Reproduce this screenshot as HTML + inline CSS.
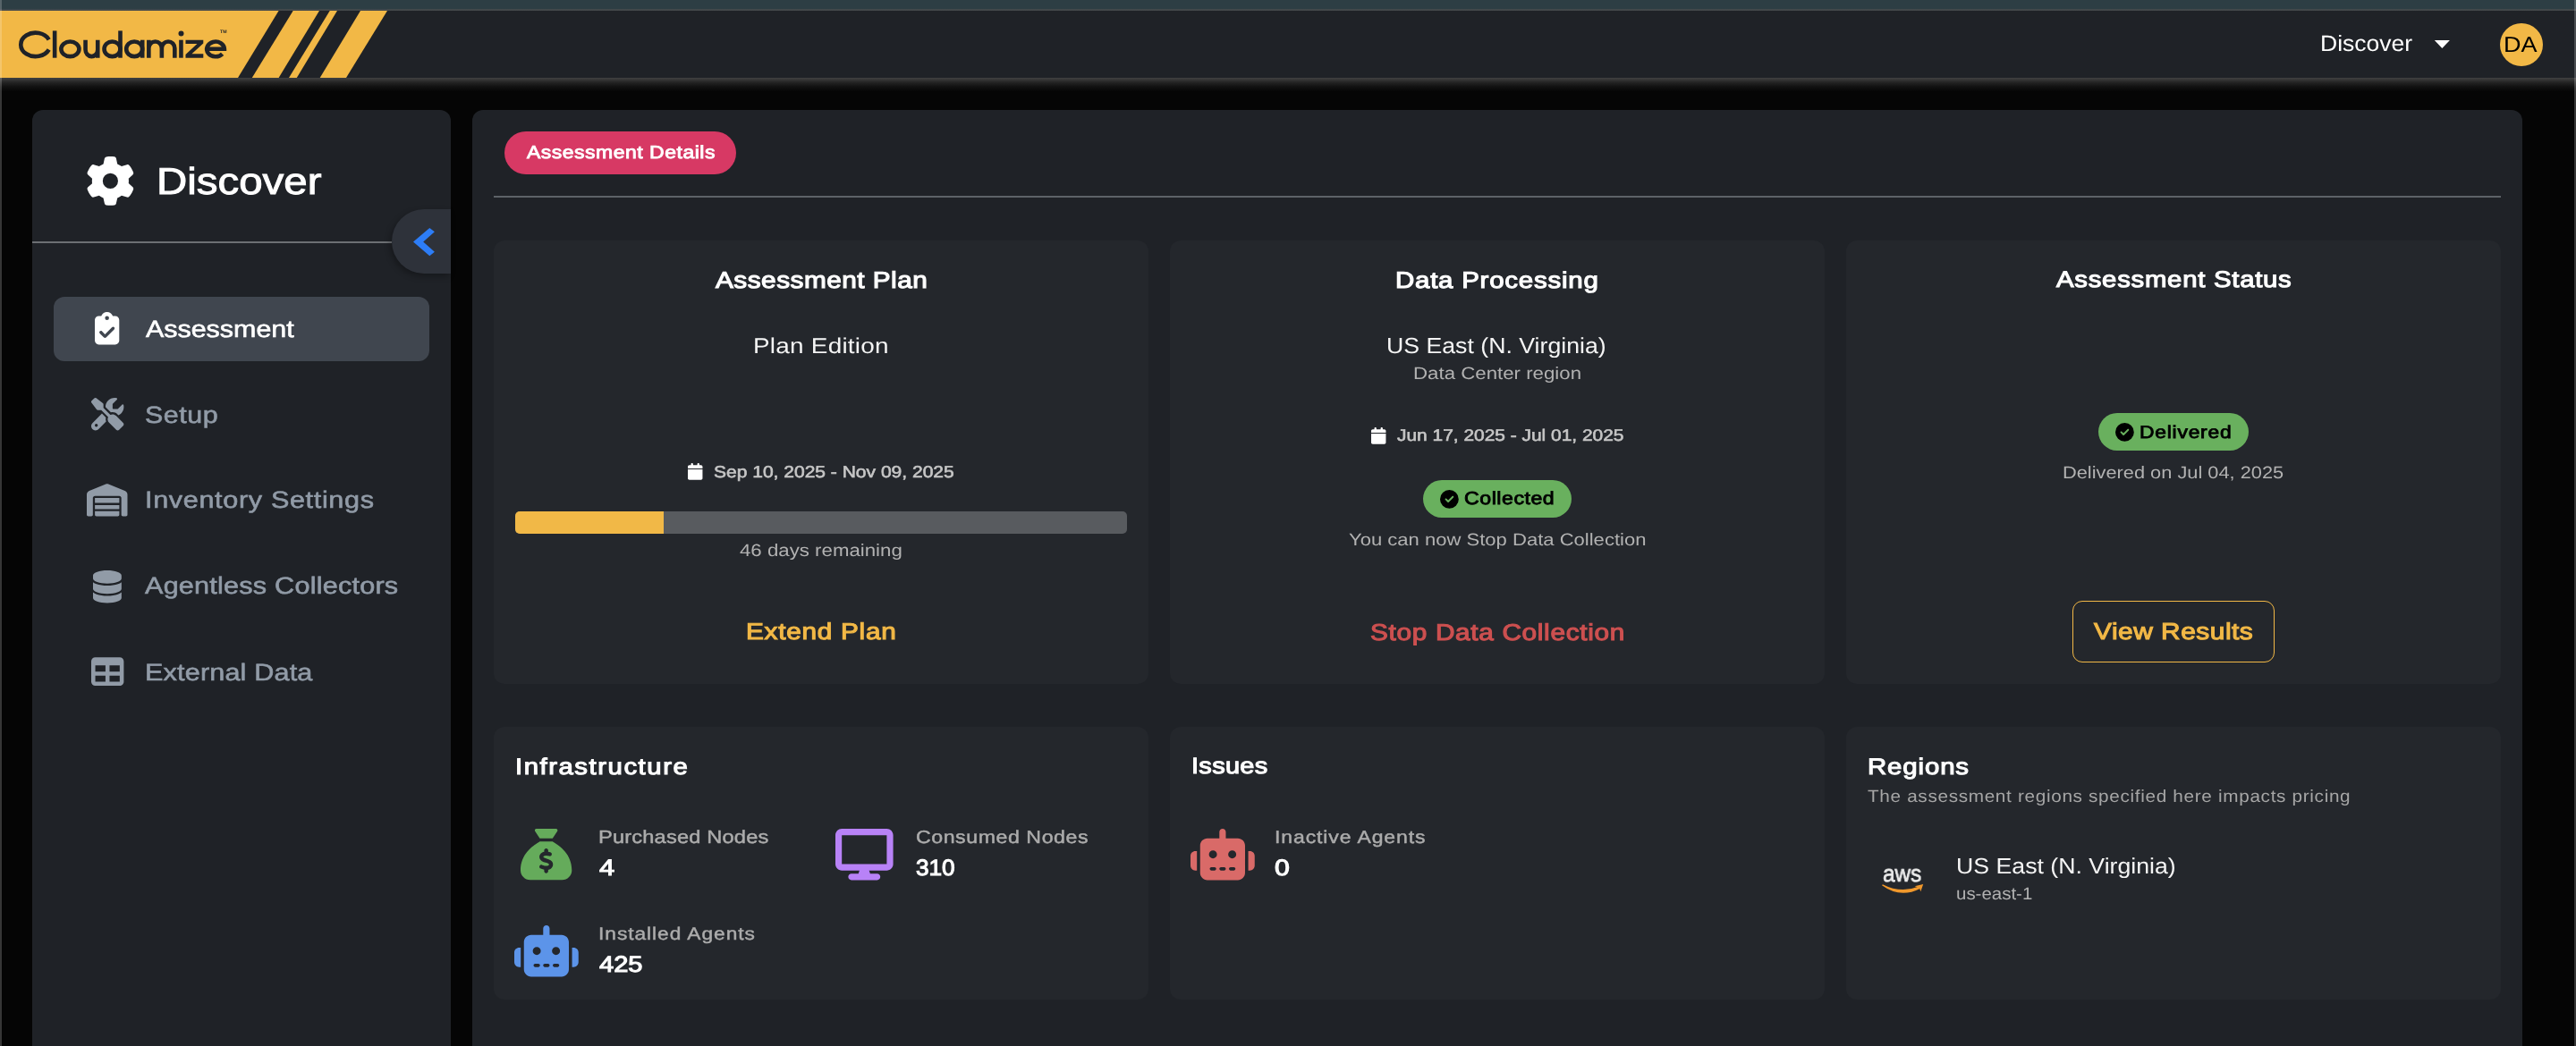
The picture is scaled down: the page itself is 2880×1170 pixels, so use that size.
<!DOCTYPE html>
<html><head><meta charset="utf-8"><title>Cloudamize - Assessment Details</title>
<style>
html,body{margin:0;padding:0}
html{width:2880px;height:1170px;overflow:hidden;background:#050505}
body{width:2880px;height:1170px;overflow:hidden;position:relative;background:#050505;font-family:"Liberation Sans",sans-serif}
.b{position:absolute;display:block}
svg.b{overflow:visible}
.t{position:absolute;display:block;white-space:nowrap;line-height:1;transform-origin:0 50%;will-change:transform;text-rendering:geometricPrecision;-webkit-font-smoothing:antialiased;font-family:"Liberation Sans",sans-serif}
</style></head><body>
<div class="b" style="left:0px;top:0px;width:2880px;height:10px;background:#2d3e44;border-radius:0px;"></div>
<div class="b" style="left:0px;top:10px;width:2880px;height:2px;background:linear-gradient(#3a4548 0,#464a4d 50%,#43474a 100%);border-radius:0px;"></div>
<div class="b" style="left:0px;top:12px;width:2880px;height:75px;background:#1f2227;border-radius:0px;"></div>
<div class="b" style="left:0px;top:87px;width:2880px;height:16px;background:linear-gradient(#414141 0,#363636 2px,#242424 5px,#111 10px,#050505 15.5px);border-radius:0px;"></div>
<svg class="b" style="left:0;top:12px" width="460" height="75" viewBox="0 12 460 75"><polygon points="0,12 311.6,12 266,87 0,87" fill="#f2b846"/><polygon points="327.7,12 357,12 311.6,87 281.8,87" fill="#f2b846"/><polygon points="368.75,12 377,12 331.8,87 323,87" fill="#f2b846"/><polygon points="403,12 433,12 387,87 357.7,87" fill="#f2b846"/></svg>
<svg class="b" style="left:0;top:12px" width="300" height="75" viewBox="0 12 300 75" fill="none" stroke="#1f2228" stroke-width="4.6"><path d="M54.7 44.3 A16.5 13.2 0 1 0 54.7 55.5"/><path d="M61.15 34.4 V64.7"/><ellipse cx="78.4" cy="54.8" rx="10.05" ry="8.35"/><path d="M95.55 44.7 V55.5 A6.85 7.6 0 0 0 109.25 55.5 M109.25 44.7 V64.7"/><ellipse cx="125.5" cy="54.8" rx="9" ry="8.35"/><path d="M134.5 34.4 V64.7"/><ellipse cx="150.2" cy="54.8" rx="9" ry="8.35"/><path d="M159.2 44.7 V64.7"/><path d="M166.35 44.7 V64.7 M166.35 54 A7.25 7.5 0 0 1 180.85 54 V64.7 M180.85 54 A7.25 7.5 0 0 1 195.35 54 V64.7"/><path d="M202.45 44.7 V64.7"/><path d="M231.2 54.8 H250.9 A9.85 8.35 0 1 0 248.6 60.3"/><polygon points="207.5,44.7 227.3,44.7 227.3,48.6 214.4,60.3 227.3,60.3 227.3,64.7 207.5,64.7 207.5,60.9 220.4,49.1 207.5,49.1" fill="#1f2228" stroke="none"/><circle cx="202.5" cy="37.4" r="3" fill="#1f2228" stroke="none"/></svg>
<span class="t" style="left:246.2px;top:33.6px;font-size:5.2px;font-weight:700;color:#1f2228">TM</span>
<span class="t" style="left:2593.73px;top:37px;font-size:25.00px;font-weight:400;color:#fff;letter-spacing:0.000px;transform:scaleX(1.0613);">Discover</span>
<svg class="b" style="left:2721px;top:44px" width="19" height="11" viewBox="2721 44 19 11"><polygon points="2721.8,44.9 2738.9,44.9 2730.35,53.9" fill="#fff"/></svg>
<div class="b" style="left:2795px;top:25.95px;width:48.2px;height:48.2px;background:#f2b846;border-radius:25px;"></div>
<span class="t" style="left:2799.39px;top:39px;font-size:24.42px;font-weight:400;color:#000;letter-spacing:0.000px;transform:scaleX(1.1078);">DA</span>
<div class="b" style="left:36px;top:122.8px;width:468px;height:1047.2px;background:#1f2227;border-radius:0px;border-radius:12px 12px 0 0"></div>
<div class="b" style="left:527.8px;top:122.8px;width:2292.2px;height:1047.2px;background:#1f2227;border-radius:0px;border-radius:12px 12px 0 0"></div>
<svg class="b" style="left:95.95px;top:175.10px;" width="54.80" height="54.80" viewBox="0 0 512 512" fill="#fff"><path d="M495.9 166.6c3.2 8.7 .5 18.4-6.4 24.6l-43.3 39.4c1.1 8.3 1.7 16.800 1.7 25.400s-.6 17.100-1.700 25.400l43.300 39.400c6.900 6.200 9.600 15.900 6.400 24.600c-4.400 11.900-9.700 23.300-15.800 34.300l-4.700 8.100c-6.600 11-14 21.400-22.100 31.200c-5.900 7.200-15.700 9.600-24.500 6.800l-55.700-17.700c-13.400 10.300-28.200 18.900-44 25.400l-12.500 57.100c-2 9.100-9 16.300-18.200 17.800c-13.800 2.300-28 3.500-42.500 3.500s-28.700-1.200-42.500-3.500c-9.200-1.500-16.200-8.700-18.200-17.800l-12.500-57.100c-15.800-6.500-30.600-15.100-44-25.400L83.100 425.900c-8.800 2.800-18.600 .3-24.500-6.800c-8.100-9.800-15.500-20.200-22.100-31.200l-4.700-8.100c-6.100-11-11.400-22.400-15.800-34.300c-3.200-8.700-.5-18.400 6.400-24.600l43.300-39.400C64.600 273.100 64 264.600 64 256s.6-17.100 1.700-25.400L22.400 191.200c-6.900-6.200-9.600-15.900-6.400-24.600c4.400-11.900 9.700-23.300 15.800-34.300l4.700-8.100c6.600-11 14-21.400 22.100-31.200c5.900-7.200 15.700-9.600 24.500-6.800l55.700 17.700c13.400-10.300 28.200-18.900 44-25.400l12.500-57.100c2-9.100 9-16.300 18.200-17.800C227.300 1.200 241.500 0 256 0s28.700 1.200 42.500 3.500c9.200 1.500 16.200 8.700 18.200 17.800l12.500 57.100c15.800 6.500 30.600 15.100 44 25.400l55.700-17.700c8.800-2.800 18.600-.3 24.500 6.800c8.100 9.800 15.500 20.200 22.100 31.200l4.700 8.100c6.100 11 11.400 22.400 15.800 34.300zM256 336a80 80 0 1 0 0-160 80 80 0 1 0 0 160z"/></svg>
<span class="t" style="left:174.63px;top:182px;font-size:41.79px;font-weight:400;color:#fff;letter-spacing:0.000px;transform:scaleX(1.1354);-webkit-text-stroke:0.95px #fff;">Discover</span>
<div class="b" style="left:36px;top:269.8px;width:402px;height:2.2px;background:#6c6f73;border-radius:0px;"></div>
<div class="b" style="left:437.8px;top:234.1px;width:66.2px;height:71.8px;background:#2e323a;border-radius:0px;border-radius:36px 0 0 36px;box-shadow:-2px 3px 7px rgba(0,0,0,.3)"></div>
<svg class="b" style="left:458px;top:252px" width="32" height="38" viewBox="458 252 32 38"><polygon points="480.3,254.9 485.9,259.3 473.2,270.55 485.9,281.8 480.3,286.2 462,270.55" fill="#2d7df6"/></svg>
<div class="b" style="left:60px;top:332px;width:420px;height:72px;background:#40464f;border-radius:12px;"></div>
<svg class="b" style="left:106.35px;top:349.30px;" width="27.30" height="36.40" viewBox="0 0 384 512" fill="#fff"><path d="M192 0c-41.800 0-77.400 26.700-90.500 64H64C28.700 64 0 92.700 0 128V448c0 35.300 28.700 64 64 64H320c35.300 0 64-28.700 64-64V128c0-35.300-28.700-64-64-64H282.500C269.400 26.700 233.800 0 192 0zm0 64a32 32 0 1 1 0 64 32 32 0 1 1 0-64zM305 273L177 401c-9.400 9.400-24.600 9.400-33.900 0L79 337c-9.400-9.400-9.400-24.600 0-33.900s24.600-9.400 33.900 0l47 47L271 239c9.400-9.400 24.600-9.400 33.900 0s9.400 24.600 0 33.900z"/></svg>
<span class="t" style="left:162.64px;top:355px;font-size:26.60px;font-weight:400;color:#fff;letter-spacing:0.000px;transform:scaleX(1.1438);-webkit-text-stroke:0.60px #fff;">Assessment</span>
<svg class="b" style="left:101.80px;top:445.35px;" width="36.40" height="36.40" viewBox="0 0 512 512" fill="#919ba7"><path d="M78.600 5C69.100-2.400 55.600-1.500 47 7L7 47c-8.500 8.500-9.400 22-2.100 31.600l80 104c4.500 5.900 11.600 9.400 19 9.400h54.100l109 109c-14.700 29-10 65.400 14.300 89.600l112 112c12.500 12.500 32.800 12.500 45.300 0l64-64c12.500-12.500 12.500-32.800 0-45.300l-112-112c-24.200-24.200-60.600-29-89.600-14.300l-109-109V104c0-7.500-3.500-14.500-9.400-19L78.600 5zM19.900 396.100C7.200 408.800 0 426.100 0 444.100C0 481.600 30.400 512 67.900 512c18 0 35.300-7.200 48-19.900L233.700 374.300c-7.800-20.900-9-43.600-3.600-65.100l-61.700-61.700L19.900 396.100zM512 144c0-10.500-1.100-20.700-3.200-30.500c-2.400-11.200-16.100-14.100-24.200-6l-63.900 63.900c-3 3-7.100 4.700-11.300 4.700H352c-8.800 0-16-7.200-16-16V102.600c0-4.200 1.700-8.300 4.700-11.300l63.900-63.900c8.100-8.100 5.200-21.800-6-24.200C388.700 1.100 378.500 0 368 0C288.500 0 224 64.500 224 144l0 .8 85.300 85.300c36-9.100 75.800 .5 104 28.700L429 274.500c49-23 83-72.800 83-130.500zM56 432a24 24 0 1 1 48 0 24 24 0 1 1 -48 0z"/></svg>
<span class="t" style="left:162.29px;top:451px;font-size:26.45px;font-weight:400;color:#919ba7;letter-spacing:0.501px;transform:scaleX(1.1500);-webkit-text-stroke:0.60px #919ba7;">Setup</span>
<svg class="b" style="left:97.25px;top:541.40px;" width="45.50" height="36.40" viewBox="0 0 640 512" fill="#919ba7"><path d="M0 488V171.3c0-26.200 15.900-49.700 40.200-59.400L308.100 4.800c7.600-3.100 16.100-3.100 23.800 0L599.800 111.900c24.300 9.700 40.200 33.300 40.200 59.400V488c0 13.300-10.700 24-24 24H568c-13.300 0-24-10.700-24-24V224c0-17.700-14.300-32-32-32H128c-17.700 0-32 14.300-32 32V488c0 13.300-10.700 24-24 24H24c-13.300 0-24-10.700-24-24zm488 24l-336 0c-13.300 0-24-10.700-24-24V432H512l0 56c0 13.300-10.700 24-24 24zM128 400V336H512v64H128zm0-96V224H512l0 80H128z"/></svg>
<span class="t" style="left:161.66px;top:546px;font-size:26.60px;font-weight:400;color:#919ba7;letter-spacing:0.573px;transform:scaleX(1.1500);-webkit-text-stroke:0.60px #919ba7;">Inventory Settings</span>
<svg class="b" style="left:104.08px;top:637.50px;" width="31.85" height="36.40" viewBox="0 0 448 512" fill="#919ba7"><path d="M448 80v48c0 44.200-100.300 80-224 80S0 172.200 0 128V80C0 35.800 100.300 0 224 0S448 35.800 448 80zM393.200 214.700c20.800-7.400 39.900-16.900 54.800-28.600V288c0 44.200-100.300 80-224 80S0 332.200 0 288V186.100c14.900 11.800 34 21.200 54.800 28.600C99.700 230.700 159.500 240 224 240s124.300-9.300 169.200-25.300zM0 346.100c14.900 11.800 34 21.200 54.800 28.600C99.700 390.700 159.500 400 224 400s124.300-9.300 169.200-25.300c20.800-7.400 39.900-16.900 54.800-28.600V432c0 44.200-100.300 80-224 80S0 476.200 0 432V346.100z"/></svg>
<span class="t" style="left:162.44px;top:642px;font-size:26.60px;font-weight:400;color:#919ba7;letter-spacing:0.198px;transform:scaleX(1.1500);-webkit-text-stroke:0.60px #919ba7;">Agentless Collectors</span>
<svg class="b" style="left:101.80px;top:733.40px;" width="36.40" height="36.40" viewBox="0 0 512 512" fill="#919ba7"><path d="M64 256V160H224v96H64zm0 64H224v96H64V320zm224 96V320H448v96H288zM448 256H288V160H448v96zM64 32C28.700 32 0 60.700 0 96V416c0 35.300 28.700 64 64 64H448c35.300 0 64-28.700 64-64V96c0-35.300-28.700-64-64-64H64z"/></svg>
<span class="t" style="left:161.66px;top:739px;font-size:26.60px;font-weight:400;color:#919ba7;letter-spacing:0.150px;transform:scaleX(1.1500);-webkit-text-stroke:0.60px #919ba7;">External Data</span>
<div class="b" style="left:564px;top:146.9px;width:259px;height:48.1px;background:#d73964;border-radius:24.05px;"></div>
<span class="t" style="left:588.69px;top:161px;font-size:19.99px;font-weight:400;color:#fff;letter-spacing:0.439px;transform:scaleX(1.1500);-webkit-text-stroke:0.85px #fff;">Assessment Details</span>
<div class="b" style="left:552px;top:219.1px;width:2244px;height:2px;background:#5d6267;border-radius:0px;"></div>
<div class="b" style="left:552px;top:269px;width:732px;height:496px;background:#24272c;border-radius:12px;"></div>
<div class="b" style="left:552px;top:813px;width:732px;height:305px;background:#24272c;border-radius:12px;"></div>
<div class="b" style="left:1308px;top:269px;width:732px;height:496px;background:#24272c;border-radius:12px;"></div>
<div class="b" style="left:1308px;top:813px;width:732px;height:305px;background:#24272c;border-radius:12px;"></div>
<div class="b" style="left:2064px;top:269px;width:732px;height:496px;background:#24272c;border-radius:12px;"></div>
<div class="b" style="left:2064px;top:813px;width:732px;height:305px;background:#24272c;border-radius:12px;"></div>
<span class="t" style="left:799.73px;top:302px;font-size:25.87px;font-weight:400;color:#fff;letter-spacing:0.439px;transform:scaleX(1.1500);-webkit-text-stroke:1.10px #fff;">Assessment Plan</span>
<span class="t" style="left:842.12px;top:376px;font-size:24.27px;font-weight:400;color:#f4f4f4;letter-spacing:0.205px;transform:scaleX(1.1500);">Plan Edition</span>
<svg class="b" style="left:768.73px;top:518.15px;" width="16.45" height="18.80" viewBox="0 0 448 512" fill="#fff"><path d="M96 32V64H48C21.500 64 0 85.500 0 112v48H448V112c0-26.500-21.500-48-48-48H352V32c0-17.700-14.300-32-32-32s-32 14.300-32 32V64H160V32c0-17.700-14.300-32-32-32S96 14.300 96 32zM448 192H0V464c0 26.500 21.500 48 48 48H400c26.500 0 48-21.500 48-48V192z"/></svg>
<span class="t" style="left:798.18px;top:519px;font-size:18.46px;font-weight:400;color:#c6c6c6;letter-spacing:0.000px;transform:scaleX(1.1397);-webkit-text-stroke:0.60px #c6c6c6;">Sep 10, 2025 - Nov 09, 2025</span>
<div class="b" style="left:575.9px;top:571.8px;width:684.2px;height:25.3px;background:#585b5f;border-radius:5px;"></div>
<div class="b" style="left:575.9px;top:571.8px;width:166.3px;height:25.3px;background:#f1b847;border-radius:0px;border-radius:5px 0 0 5px"></div>
<span class="t" style="left:826.75px;top:607px;font-size:19.33px;font-weight:400;color:#b2b2b2;letter-spacing:0.008px;transform:scaleX(1.1500);">46 days remaining</span>
<span class="t" style="left:833.91px;top:695px;font-size:25.87px;font-weight:400;color:#f2b846;letter-spacing:0.643px;transform:scaleX(1.1500);-webkit-text-stroke:1.10px #f2b846;">Extend Plan</span>
<span class="t" style="left:1560.43px;top:302px;font-size:25.60px;font-weight:400;color:#fff;letter-spacing:0.671px;transform:scaleX(1.1500);-webkit-text-stroke:1.09px #fff;">Data Processing</span>
<span class="t" style="left:1550.38px;top:376px;font-size:24.56px;font-weight:400;color:#f4f4f4;letter-spacing:0.000px;transform:scaleX(1.0871);">US East (N. Virginia)</span>
<span class="t" style="left:1579.66px;top:409px;font-size:19.33px;font-weight:400;color:#b2b2b2;letter-spacing:0.013px;transform:scaleX(1.1500);">Data Center region</span>
<svg class="b" style="left:1532.98px;top:477.85px;" width="16.45" height="18.80" viewBox="0 0 448 512" fill="#fff"><path d="M96 32V64H48C21.500 64 0 85.500 0 112v48H448V112c0-26.500-21.500-48-48-48H352V32c0-17.700-14.300-32-32-32s-32 14.300-32 32V64H160V32c0-17.700-14.300-32-32-32S96 14.300 96 32zM448 192H0V464c0 26.500 21.500 48 48 48H400c26.500 0 48-21.500 48-48V192z"/></svg>
<span class="t" style="left:1562.12px;top:478px;font-size:18.31px;font-weight:400;color:#c6c6c6;letter-spacing:0.000px;transform:scaleX(1.1427);-webkit-text-stroke:0.60px #c6c6c6;">Jun 17, 2025 - Jul 01, 2025</span>
<div class="b" style="left:1591px;top:536.9px;width:166.2px;height:42.2px;background:#69b05e;border-radius:21.1px;"></div>
<svg class="b" style="left:1609.60px;top:547.70px;" width="20.80" height="20.80" viewBox="0 0 512 512" fill="#000"><path d="M256 512A256 256 0 1 0 256 0a256 256 0 1 0 0 512zM369 209L241 337c-9.400 9.400-24.600 9.400-33.900 0l-64-64c-9.400-9.400-9.400-24.600 0-33.900s24.600-9.400 33.900 0l47 47L335 175c9.400-9.400 24.600-9.400 33.900 0s9.400 24.600 0 33.900z"/></svg>
<span class="t" style="left:1637.20px;top:548px;font-size:20.13px;font-weight:400;color:#000;letter-spacing:0.467px;transform:scaleX(1.1500);-webkit-text-stroke:0.85px #000;">Collected</span>
<span class="t" style="left:1508.06px;top:595px;font-size:19.19px;font-weight:400;color:#b2b2b2;letter-spacing:0.000px;transform:scaleX(1.1486);">You can now Stop Data Collection</span>
<span class="t" style="left:1531.80px;top:696px;font-size:25.87px;font-weight:400;color:#cd5050;letter-spacing:0.601px;transform:scaleX(1.1500);-webkit-text-stroke:1.10px #cd5050;">Stop Data Collection</span>
<span class="t" style="left:2298.92px;top:301px;font-size:25.47px;font-weight:400;color:#fff;letter-spacing:0.656px;transform:scaleX(1.1500);-webkit-text-stroke:1.08px #fff;">Assessment Status</span>
<div class="b" style="left:2345.8px;top:461.8px;width:168.5px;height:42.6px;background:#69b05e;border-radius:21.3px;"></div>
<svg class="b" style="left:2364.90px;top:472.65px;" width="20.80" height="20.80" viewBox="0 0 512 512" fill="#000"><path d="M256 512A256 256 0 1 0 256 0a256 256 0 1 0 0 512zM369 209L241 337c-9.400 9.400-24.600 9.400-33.900 0l-64-64c-9.400-9.400-9.400-24.600 0-33.900s24.600-9.400 33.900 0l47 47L335 175c9.400-9.400 24.600-9.400 33.900 0s9.400 24.600 0 33.900z"/></svg>
<span class="t" style="left:2392.00px;top:475px;font-size:19.85px;font-weight:400;color:#000;letter-spacing:0.682px;transform:scaleX(1.1500);-webkit-text-stroke:0.84px #000;">Delivered</span>
<span class="t" style="left:2305.90px;top:520px;font-size:19.19px;font-weight:400;color:#b2b2b2;letter-spacing:0.000px;transform:scaleX(1.1358);">Delivered on Jul 04, 2025</span>
<div class="b" style="left:2316.7px;top:671.7px;width:226.7px;height:69.5px;background:transparent;border-radius:11px;box-sizing:border-box;border:1.3px solid #f2b846"></div>
<span class="t" style="left:2341.43px;top:695px;font-size:25.95px;font-weight:400;color:#f2b846;letter-spacing:0.468px;transform:scaleX(1.1500);-webkit-text-stroke:1.10px #f2b846;">View Results</span>
<span class="t" style="left:575.53px;top:846px;font-size:25.47px;font-weight:400;color:#fff;letter-spacing:1.350px;transform:scaleX(1.1500);-webkit-text-stroke:1.08px #fff;">Infrastructure</span>
<svg class="b" style="left:581.90px;top:926.70px;" width="57.30" height="57.30" viewBox="0 0 512 512" fill="#65ab5b"><path d="M320 96H192L144.600 24.900C137.500 14.200 145.100 0 157.900 0H354.100c12.800 0 20.400 14.200 13.300 24.900L320 96zM192 128H320c3.800 2.500 8.100 5.300 13 8.400C389.700 172.700 512 250.900 512 416c0 53-43 96-96 96H96c-53 0-96-43-96-96C0 250.900 122.300 172.700 179 136.400l0 0 0 0c4.800-3.100 9.200-5.900 13-8.400zm84 88c0-11-9-20-20-20s-20 9-20 20v14c-7.600 1.700-15.200 4.400-22.200 8.500c-13.900 8.300-25.900 22.800-25.800 43.900c.1 20.300 12 33.100 24.700 40.700c11 6.600 24.700 10.800 35.600 14l1.700 .5c12.600 3.800 21.800 6.800 28 10.700c5.100 3.200 5.800 5.400 5.900 8.200c.1 5-1.800 8-5.900 10.500c-5 3.100-12.900 5-21.400 4.700c-11.100-.4-21.500-3.900-35.100-8.500c-2.300-.8-4.700-1.600-7.200-2.400c-10.500-3.500-21.800 2.200-25.300 12.600s2.200 21.800 12.600 25.300c1.900 .6 4 1.300 6.100 2.100l0 0 0 0c8.300 2.900 17.900 6.200 28.200 8.400V424c0 11 9 20 20 20s20-9 20-20V410.200c8-1.700 16-4.500 23.200-9c14.300-8.900 25.100-24.100 24.800-45c-.3-20.300-11.700-33.400-24.600-41.600c-11.500-7.200-25.900-11.600-37.100-15l0 0-.7-.2c-12.800-3.900-21.900-6.700-28.300-10.500c-5.200-3.100-5.300-4.900-5.300-6.700c0-3.700 1.400-6.500 6.200-9.300c5.400-3.200 13.600-5.100 21.500-5c9.600 .1 20.200 2.200 31.200 5.200c10.700 2.800 21.600-3.500 24.500-14.200s-3.500-21.600-14.200-24.500c-6.500-1.700-13.700-3.400-21.100-4.700V216z"/></svg>
<span class="t" style="left:668.87px;top:927px;font-size:20.54px;font-weight:400;color:#acacac;letter-spacing:0.163px;transform:scaleX(1.1500);-webkit-text-stroke:0.47px #acacac;">Purchased Nodes</span>
<span class="t" style="left:670.27px;top:959px;font-size:25.47px;font-weight:400;color:#fff;letter-spacing:0.000px;transform:scaleX(1.2102);-webkit-text-stroke:1.08px #fff;">4</span>
<svg class="b" style="left:933.56px;top:926.75px;" width="64.58" height="57.40" viewBox="0 0 576 512" fill="#b882f7"><path d="M64 0C28.700 0 0 28.700 0 64V352c0 35.300 28.700 64 64 64H240l-10.700 32H160c-17.700 0-32 14.300-32 32s14.300 32 32 32H416c17.700 0 32-14.300 32-32s-14.300-32-32-32H346.700L336 416H512c35.300 0 64-28.700 64-64V64c0-35.300-28.700-64-64-64H64zM512 64V352H64V64H512z"/></svg>
<span class="t" style="left:1024.18px;top:927px;font-size:20.12px;font-weight:400;color:#acacac;letter-spacing:0.493px;transform:scaleX(1.1500);-webkit-text-stroke:0.46px #acacac;">Consumed Nodes</span>
<span class="t" style="left:1024.04px;top:959px;font-size:25.19px;font-weight:400;color:#fff;letter-spacing:0.000px;transform:scaleX(1.0388);-webkit-text-stroke:1.07px #fff;">310</span>
<svg class="b" style="left:574.73px;top:1034.80px;" width="71.75" height="57.40" viewBox="0 0 640 512" fill="#5c94e9"><path d="M320 0c17.700 0 32 14.300 32 32V96H472c39.800 0 72 32.200 72 72V440c0 39.800-32.200 72-72 72H168c-39.800 0-72-32.200-72-72V168c0-39.800 32.200-72 72-72H288V32c0-17.700 14.300-32 32-32zM208 384c-8.800 0-16 7.200-16 16s7.200 16 16 16h32c8.800 0 16-7.200 16-16s-7.200-16-16-16H208zm96 0c-8.800 0-16 7.200-16 16s7.200 16 16 16h32c8.800 0 16-7.200 16-16s-7.200-16-16-16H304zm96 0c-8.800 0-16 7.200-16 16s7.200 16 16 16h32c8.800 0 16-7.200 16-16s-7.200-16-16-16H400zM264 256a40 40 0 1 0 -80 0 40 40 0 1 0 80 0zm152 40a40 40 0 1 0 0-80 40 40 0 1 0 0 80zM48 224H64V416H48c-26.500 0-48-21.500-48-48V272c0-26.500 21.500-48 48-48zm544 0c26.500 0 48 21.500 48 48v96c0 26.500-21.500 48-48 48H576V224h16z"/></svg>
<span class="t" style="left:668.78px;top:1036px;font-size:19.77px;font-weight:400;color:#acacac;letter-spacing:0.834px;transform:scaleX(1.1500);-webkit-text-stroke:0.45px #acacac;">Installed Agents</span>
<span class="t" style="left:670.06px;top:1067px;font-size:25.19px;font-weight:400;color:#fff;letter-spacing:0.000px;transform:scaleX(1.1539);-webkit-text-stroke:1.07px #fff;">425</span>
<span class="t" style="left:1331.75px;top:845px;font-size:25.19px;font-weight:400;color:#fff;letter-spacing:0.263px;transform:scaleX(1.1500);-webkit-text-stroke:1.07px #fff;">Issues</span>
<svg class="b" style="left:1330.72px;top:926.90px;" width="71.75" height="57.40" viewBox="0 0 640 512" fill="#d96a68"><path d="M320 0c17.700 0 32 14.300 32 32V96H472c39.800 0 72 32.200 72 72V440c0 39.800-32.200 72-72 72H168c-39.800 0-72-32.200-72-72V168c0-39.800 32.200-72 72-72H288V32c0-17.700 14.300-32 32-32zM208 384c-8.800 0-16 7.200-16 16s7.200 16 16 16h32c8.800 0 16-7.200 16-16s-7.200-16-16-16H208zm96 0c-8.800 0-16 7.200-16 16s7.200 16 16 16h32c8.800 0 16-7.200 16-16s-7.200-16-16-16H304zm96 0c-8.800 0-16 7.200-16 16s7.200 16 16 16h32c8.800 0 16-7.200 16-16s-7.200-16-16-16H400zM264 256a40 40 0 1 0 -80 0 40 40 0 1 0 80 0zm152 40a40 40 0 1 0 0-80 40 40 0 1 0 0 80zM48 224H64V416H48c-26.500 0-48-21.500-48-48V272c0-26.500 21.500-48 48-48zm544 0c26.500 0 48 21.500 48 48v96c0 26.500-21.500 48-48 48H576V224h16z"/></svg>
<span class="t" style="left:1424.66px;top:927px;font-size:19.99px;font-weight:400;color:#acacac;letter-spacing:0.784px;transform:scaleX(1.1500);-webkit-text-stroke:0.45px #acacac;">Inactive Agents</span>
<span class="t" style="left:1425.40px;top:959px;font-size:25.19px;font-weight:400;color:#fff;letter-spacing:0.000px;transform:scaleX(1.2001);-webkit-text-stroke:1.07px #fff;">0</span>
<span class="t" style="left:2087.53px;top:846px;font-size:25.54px;font-weight:400;color:#fff;letter-spacing:0.770px;transform:scaleX(1.1500);-webkit-text-stroke:1.08px #fff;">Regions</span>
<span class="t" style="left:2088.28px;top:882px;font-size:19.19px;font-weight:400;color:#a6a6a6;letter-spacing:0.626px;transform:scaleX(1.0800);">The assessment regions specified here impacts pricing</span>
<span class="t" style="left:2105.36px;top:964px;font-size:26.24px;font-weight:400;color:#ececec;letter-spacing:0.000px;transform:scaleX(0.9273);-webkit-text-stroke:0.70px #ececec;">aws</span>
<svg class="b" style="left:2100px;top:985px" width="56" height="20" viewBox="2100 985 56 20"><path d="M2104.0 990.2 Q2124.5 1005.2 2146.6 993.9 L2145.6 991.6 Q2125 999.6 2104.9 989.2 Z" fill="#f0982c"/><path d="M2140.6 991.2 L2150.2 989.1 L2147.3 997.3 L2145.9 992.9 Z" fill="#f0982c"/></svg>
<span class="t" style="left:2186.53px;top:958px;font-size:24.56px;font-weight:400;color:#f4f4f4;letter-spacing:0.000px;transform:scaleX(1.0873);">US East (N. Virginia)</span>
<span class="t" style="left:2186.92px;top:991px;font-size:19.19px;font-weight:400;color:#b2b2b2;letter-spacing:0.000px;transform:scaleX(1.0665);">us-east-1</span>
<div class="b" style="left:0px;top:0px;width:2px;height:1170px;background:rgba(255,255,255,.2);border-radius:0px;"></div>
<div class="b" style="left:2878px;top:0px;width:2px;height:1170px;background:rgba(255,255,255,.2);border-radius:0px;"></div>
</body></html>
